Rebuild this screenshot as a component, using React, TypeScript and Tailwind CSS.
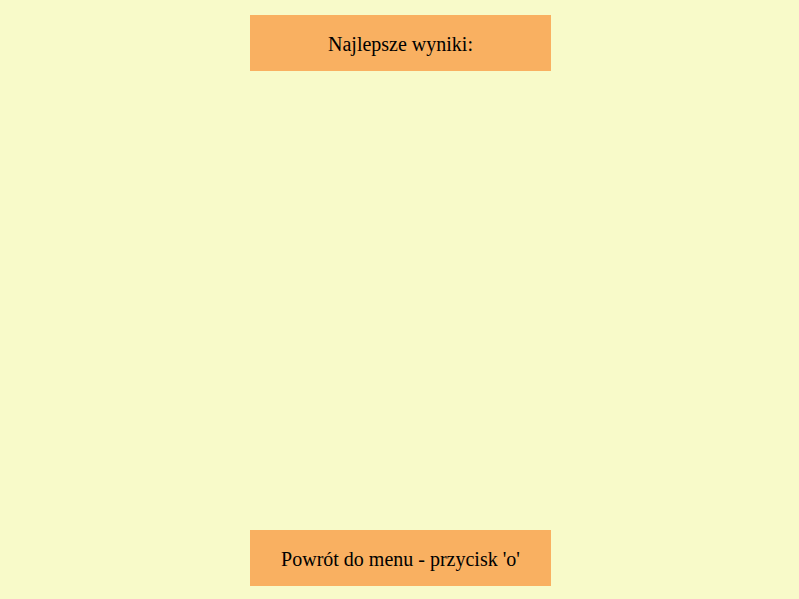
export default function App() {
  return (
    <div className="flex flex-col items-center h-[599px] bg-[#f8fac9] pt-[15px] pb-[13px] font-['Liberation_Serif',serif] text-black">
      <div className="flex items-center justify-center w-[301px] h-[56px] ml-[2px] bg-[#f9b061] text-[20px] pt-[1px]">
        Najlepsze wyniki:
      </div>
      <div className="flex-1"></div>
      <div className="flex items-center justify-center w-[301px] h-[56px] ml-[2px] bg-[#f9b061] text-[20px] pt-[1px]">
        Powrót do menu - przycisk 'o'
      </div>
    </div>
  );
}
